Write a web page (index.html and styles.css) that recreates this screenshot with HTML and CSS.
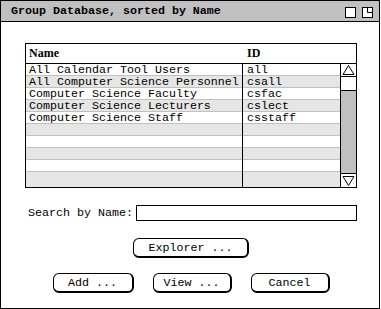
FILE: index.html
```html
<!DOCTYPE html>
<html>
<head>
<meta charset="utf-8">
<link rel="stylesheet" href="styles.css">
</head>
<body>
<div class="window">
  <div class="titlebar">
    <span class="title">Group Database, sorted by Name</span>
    <span class="icons">
      <svg class="ico" width="11" height="11" viewBox="0 0 11 11"><rect x="0.5" y="0.5" width="10" height="10" fill="#fff" stroke="#000"/></svg>
      <svg class="ico" width="11" height="11" viewBox="0 0 11 11"><rect x="0.5" y="0.5" width="10" height="10" fill="#fff" stroke="#000"/><path d="M5.5 0.5V5.5H10.5" fill="none" stroke="#000"/></svg>
    </span>
  </div>
  <div class="content">
    <div class="table">
      <div class="thead">
        <div class="h-name">Name</div>
        <div class="h-id">ID</div>
      </div>
      <div class="tbody">
        <div class="rows">
          <div class="row"><span class="c-name">All Calendar Tool Users</span><span class="c-id">all</span></div>
          <div class="row alt"><span class="c-name">All Computer Science Personnel</span><span class="c-id">csall</span></div>
          <div class="row"><span class="c-name">Computer Science Faculty</span><span class="c-id">csfac</span></div>
          <div class="row alt"><span class="c-name">Computer Science Lecturers</span><span class="c-id">cslect</span></div>
          <div class="row"><span class="c-name">Computer Science Staff</span><span class="c-id">csstaff</span></div>
          <div class="row alt"><span class="c-name"></span><span class="c-id"></span></div>
          <div class="row"><span class="c-name"></span><span class="c-id"></span></div>
          <div class="row alt"><span class="c-name"></span><span class="c-id"></span></div>
          <div class="row"><span class="c-name"></span><span class="c-id"></span></div>
          <div class="row alt last"><span class="c-name"></span><span class="c-id"></span></div>
        </div>
        <div class="scroll">
          <div class="arrow up"><svg width="15" height="12" viewBox="0 0 15 12"><path d="M7.5 1.5L13 10.5H2Z" fill="none" stroke="#000"/></svg></div>
          <div class="thumb"></div>
          <div class="track"></div>
          <div class="arrow down"><svg width="15" height="13" viewBox="0 0 15 13"><path d="M2 2.5H13L7.5 11.5Z" fill="none" stroke="#000"/></svg></div>
        </div>
      </div>
    </div>
    <div class="search">
      <label class="search-label">Search by Name:</label>
      <div class="search-input"></div>
    </div>
    <div class="btn-row first">
      <div class="btn explorer">Explorer ...</div>
    </div>
    <div class="btn-row actions">
      <div class="btn add">Add ...</div>
      <div class="btn view">View ...</div>
      <div class="btn cancel">Cancel</div>
    </div>
  </div>
</div>
</body>
</html>
```
FILE: styles.css
```css
html, body {
  margin: 0;
  padding: 0;
  background: #fff;
}
body {
  font-family: "Liberation Mono", "DejaVu Sans Mono", monospace;
  font-size: 11.67px;
  color: #000;
}
.window {
  width: 378px;
  height: 307px;
  border: 1px solid #000;
  background: #fff;
  display: flex;
  flex-direction: column;
}
.titlebar {
  height: 20px;
  border-bottom: 1px solid #000;
  background: #c0c0c0;
  display: flex;
  align-items: center;
  padding: 0 6px 0 10px;
}
.title {
  font-weight: bold;
  flex: 1;
  white-space: nowrap;
}
.icons {
  display: flex;
  gap: 6px;
  margin-top: 2px;
}
.ico {
  display: block;
}
.content {
  padding: 21px 22px 0 24px;
  display: flex;
  flex-direction: column;
}
.table {
  width: 332px;
  height: 145px;
  box-sizing: border-box;
  border: 1px solid #000;
  display: flex;
  flex-direction: column;
}
.thead {
  height: 19px;
  flex: none;
  border-bottom: 1px solid #000;
  display: flex;
  align-items: center;
  font-family: "Liberation Serif", "Times New Roman", serif;
  font-weight: bold;
  font-size: 12px;
}
.h-name {
  width: 214px;
  padding-left: 3px;
}
.h-id {
  padding-left: 4px;
}
.tbody {
  flex: 1;
  display: flex;
  min-height: 0;
}
.rows {
  width: 314px;
  display: flex;
  flex-direction: column;
}
.row {
  height: 12px;
  flex: none;
  display: flex;
  line-height: 12px;
  white-space: nowrap;
  background: linear-gradient(to top, #c0c0c0 1px, #fff 1px);
}
.row.alt {
  background: linear-gradient(to top, #c0c0c0 1px, #e6e6e6 1px);
}
.row.last {
  flex: 1;
  background: #e6e6e6;
}
.c-name {
  width: 213px;
  padding-left: 3px;
  border-right: 1px solid #000;
}
.c-id {
  padding-left: 4px;
}
.scroll {
  width: 15px;
  border-left: 1px solid #000;
  display: flex;
  flex-direction: column;
}
.arrow {
  background: #fff;
}
.arrow svg {
  display: block;
}
.arrow.up {
  height: 12px;
  border-bottom: 1px solid #000;
}
.thumb {
  height: 13px;
  background: #fff;
  border-bottom: 1px solid #000;
}
.track {
  flex: 1;
  background: #c0c0c0;
}
.arrow.down {
  height: 13px;
  border-top: 1px solid #000;
}
.search {
  margin-top: 17px;
  display: flex;
  align-items: center;
}
.search-label {
  margin-left: 3px;
  width: 108px;
}
.search-input {
  width: 221px;
  height: 16px;
  box-sizing: border-box;
  border: 1px solid #000;
}
.btn-row {
  display: flex;
  justify-content: center;
  gap: 19px;
}
.btn-row.first {
  margin-top: 17px;
}
.btn-row.actions {
  margin-top: 15px;
}
.btn {
  height: 20px;
  box-sizing: border-box;
  border: 1px solid #000;
  border-right-width: 2px;
  border-bottom-width: 2px;
  border-radius: 6px;
  display: flex;
  align-items: center;
  justify-content: center;
  white-space: nowrap;
}
.explorer { width: 116px; }
.add { width: 81px; }
.view { width: 79px; }
.cancel { width: 79px; }
```
